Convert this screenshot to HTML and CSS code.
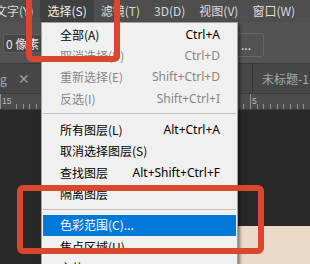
FILE: index.html
```html
<!DOCTYPE html>
<html lang="zh-CN">
<head>
<meta charset="utf-8">
<title>选择菜单</title>
<link rel="stylesheet" href="styles.css">
</head>
<body>
<div class="app">
  <div class="menubar">
    <span class="mb-item mb-first">文字(Y)</span>
    <span class="mb-item mb-active">选择(S)</span>
    <span class="mb-item">滤镜(T)</span>
    <span class="mb-item">3D(D)</span>
    <span class="mb-item">视图(V)</span>
    <span class="mb-item">窗口(W)</span>
  </div>
  <div class="options">
    <div class="field">0 像素</div>
    <div class="spacer"></div>
    <div class="opt-btn">...</div>
  </div>
  <div class="tabs">
    <div class="tab tab-left"><span class="tab-name">g</span><span class="tab-close">×</span></div>
    <div class="spacer"></div>
    <div class="tab tab-right">未标题-1</div>
  </div>
  <div class="ruler">
    <span class="ruler-mark">15</span>
    <span class="ruler-mark">5</span>
  </div>
  <div class="canvas"><div class="doc"></div></div>

  <div class="menu">
    <div class="menu-item"><span>全部(A)</span><span class="key">Ctrl+A</span></div>
    <div class="menu-item disabled"><span>取消选择(D)</span><span class="key">Ctrl+D</span></div>
    <div class="menu-item disabled"><span>重新选择(E)</span><span class="key">Shift+Ctrl+D</span></div>
    <div class="menu-item disabled"><span>反选(I)</span><span class="key">Shift+Ctrl+I</span></div>
    <div class="menu-sep"></div>
    <div class="menu-item"><span>所有图层(L)</span><span class="key">Alt+Ctrl+A</span></div>
    <div class="menu-item"><span>取消选择图层(S)</span><span class="key"></span></div>
    <div class="menu-item"><span>查找图层</span><span class="key">Alt+Shift+Ctrl+F</span></div>
    <div class="menu-item"><span>隔离图层</span><span class="key"></span></div>
    <div class="menu-sep"></div>
    <div class="menu-item hover"><span>色彩范围(C)...</span><span class="key"></span></div>
    <div class="menu-item"><span>焦点区域(U)...</span><span class="key"></span></div>
    <div class="menu-item"><span>主体</span><span class="key"></span></div>
  </div>

  <div class="mark mark-top"></div>
  <div class="mark mark-bottom"></div>
</div>
</body>
</html>
```
FILE: styles.css
```css
* { box-sizing: border-box; }
html, body { margin: 0; padding: 0; }
body {
  width: 310px;
  height: 264px;
  overflow: hidden;
  background: #282828;
  font-family: "Noto Sans CJK SC", "Noto Sans", sans-serif;
  font-size: 12px;
}
.app {
  position: relative;
  width: 310px;
  height: 264px;
  overflow: hidden;
  display: flex;
  flex-direction: column;
}
.menubar {
  height: 22px;
  flex: none;
  display: flex;
  align-items: stretch;
  background: #4e4e4e;
  color: #dcdcdc;
  white-space: nowrap;
}
.mb-item {
  padding: 0 7px;
  display: flex;
  align-items: center;
  line-height: 1;
}
.mb-first { margin-left: -12px; }
.mb-active { background: #404040; color: #f2f2f2; }

.options {
  height: 42px;
  flex: none;
  display: flex;
  align-items: flex-start;
  background: #535353;
  border-bottom: 1px solid #3a3a3a;
}
.spacer { flex: 1; }
.field {
  margin: 12px 0 0 3px;
  height: 19px;
  width: 60px;
  padding-left: 2px;
  display: flex;
  align-items: center;
  background: #474747;
  border: 1px solid #5f5f5f;
  color: #e4e4e4;
  line-height: 1;
  white-space: nowrap;
}
.opt-btn {
  margin: 11px 46px 0 0;
  width: 70px;
  height: 24px;
  padding: 0 12px 0 0;
  display: flex;
  align-items: center;
  justify-content: flex-end;
  border: 1px solid #686868;
  border-radius: 3px;
  color: #e4e4e4;
  line-height: 1;
  white-space: nowrap;
}

.tabs {
  height: 29px;
  flex: none;
  display: flex;
  background: #474747;
  color: #a9a9a9;
  white-space: nowrap;
}
.tab { display: flex; align-items: center; line-height: 1; }
.tab-left { padding-top: 1px; }
.tab-name { margin-left: 0; }
.tab-close { margin-left: 11px; color: #a0a0a0; font-size: 12px; font-weight: bold; }
.tab-right {
  width: 58px;
  padding-left: 9px;
  border-left: 1px solid #333;
  overflow: hidden;
}

.ruler {
  height: 17px;
  flex: none;
  display: grid;
  grid-template-columns: 250px 1fr;
  background-color: #4c4c4c;
  background-image: repeating-linear-gradient(to right, #8f8f8f 0, #8f8f8f 1px, transparent 1px, transparent 6.686px);
  background-size: 100% 5px;
  background-position: 16px 100%;
  background-repeat: no-repeat;
  border-top: 1px solid #3c3c3c;
  border-bottom: 1px solid #3a3a3a;
}
.ruler-mark {
  border-left: 1px solid #8f8f8f;
  padding: 3px 0 0 1px;
  color: #bdbdbd;
  font-family: "Liberation Sans", sans-serif;
  font-size: 8.5px;
  line-height: 1;
}

.canvas {
  flex: 1;
  padding: 116px 0 0 200px;
  background: #282828;
}
.doc { height: 100%; background: #e9d9c6; }

.menu {
  position: absolute;
  left: 41px;
  top: 22px;
  width: 197px;
  height: 260px;
  padding: 1px 1px 0;
  background: #f0f0f0;
  border: 1px solid #a3a3a3;
  border-bottom: none;
  box-shadow: 2px 2px 3px rgba(0, 0, 0, 0.45);
  color: #000;
  white-space: nowrap;
}
.menu-item {
  height: 21.33px;
  display: flex;
  align-items: center;
  justify-content: space-between;
  padding: 0 16px 0 17px;
  line-height: 1;
}
.menu-item .key {
  font-family: "Noto Sans", sans-serif;
  font-size: 12px;
}
.menu-item.disabled { color: #878787; }
.menu-item.hover { background: #0078d7; color: #fff; }
.menu-sep {
  height: 1px;
  margin: 4px 0 5px;
  background: #c2c2c2;
}

.mark {
  position: absolute;
  border: 6px solid #d9482c;
  border-radius: 6px;
}
.mark-top { left: 26px; top: -12px; width: 94px; height: 74px; }
.mark-bottom { left: 17px; top: 185px; width: 247px; height: 69px; }
```
